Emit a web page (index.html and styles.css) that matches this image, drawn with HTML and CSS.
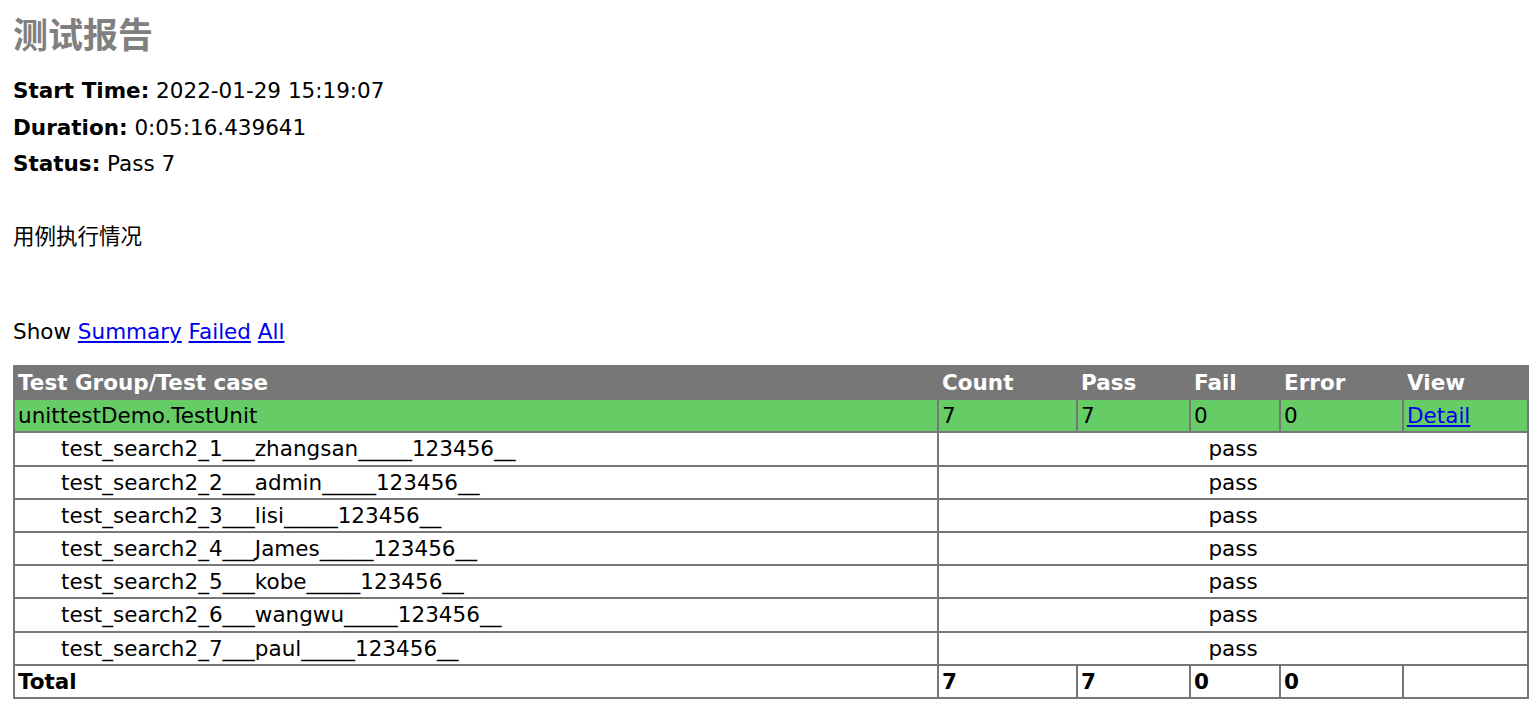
FILE: index.html
```html
<!DOCTYPE html>
<html lang="zh">
<head>
<meta charset="utf-8">
<title>测试报告</title>
<link rel="stylesheet" href="styles.css">
</head>
<body>
<div class="heading">
  <h1 class="title">测试报告</h1>
  <p class="attribute"><strong>Start Time:</strong> 2022-01-29 15:19:07</p>
  <p class="attribute"><strong>Duration:</strong> 0:05:16.439641</p>
  <p class="attribute"><strong>Status:</strong> Pass 7</p>
  <p class="description">用例执行情况</p>
</div>
<p id="show_detail_line">Show <a href="#">Summary</a> <a href="#">Failed</a> <a href="#">All</a></p>
<table id="result_table">
  <colgroup>
    <col class="c-name">
    <col class="c-count">
    <col class="c-pass">
    <col class="c-fail">
    <col class="c-error">
    <col class="c-view">
  </colgroup>
  <tr id="header_row">
    <td>Test Group/Test case</td>
    <td>Count</td>
    <td>Pass</td>
    <td>Fail</td>
    <td>Error</td>
    <td>View</td>
  </tr>
  <tr class="passClass">
    <td>unittestDemo.TestUnit</td>
    <td>7</td>
    <td>7</td>
    <td>0</td>
    <td>0</td>
    <td><a href="#">Detail</a></td>
  </tr>
  <tr><td><div class="testcase">test_search2_1___zhangsan_____123456__</div></td><td colspan="5" class="status">pass</td></tr>
  <tr><td><div class="testcase">test_search2_2___admin_____123456__</div></td><td colspan="5" class="status">pass</td></tr>
  <tr><td><div class="testcase">test_search2_3___lisi_____123456__</div></td><td colspan="5" class="status">pass</td></tr>
  <tr><td><div class="testcase">test_search2_4___James_____123456__</div></td><td colspan="5" class="status">pass</td></tr>
  <tr><td><div class="testcase">test_search2_5___kobe_____123456__</div></td><td colspan="5" class="status">pass</td></tr>
  <tr><td><div class="testcase">test_search2_6___wangwu_____123456__</div></td><td colspan="5" class="status">pass</td></tr>
  <tr><td><div class="testcase">test_search2_7___paul_____123456__</div></td><td colspan="5" class="status">pass</td></tr>
  <tr id="total_row">
    <td>Total</td>
    <td>7</td>
    <td>7</td>
    <td>0</td>
    <td>0</td>
    <td>&nbsp;</td>
  </tr>
</table>
</body>
</html>
```

FILE: styles.css
```css
html, body {
  margin: 0;
  padding: 0;
  background: #fff;
}
body {
  padding: 13px 0 0 13px;
  font-family: "DejaVu Sans", Verdana, "Noto Sans CJK SC", sans-serif;
  font-size: 21.5px;
  color: #000;
}
.title {
  margin: 0;
  font-family: "Noto Sans CJK SC", "DejaVu Sans", sans-serif;
  font-size: 35px;
  line-height: 40px;
  font-weight: bold;
  color: gray;
}
.attribute {
  margin: 25px 0 0;
  line-height: 26px;
}
.attribute + .attribute {
  margin-top: 10.5px;
}
.description {
  margin: 47px 0 0;
  line-height: 26px;
  font-family: "DejaVu Sans", "Noto Sans CJK SC", sans-serif;
}
#show_detail_line {
  margin: 69px 0 0;
  line-height: 26px;
}
a {
  color: #00e;
  text-decoration: underline;
}
#result_table {
  margin-top: 20px;
  width: 1514px;
  table-layout: fixed;
  border-collapse: collapse;
  border: 2px solid #777;
}
.c-name { width: 924px; }
.c-count { width: 139px; }
.c-pass { width: 113px; }
.c-fail { width: 90px; }
.c-error { width: 123px; }
.c-view { width: 125px; }
#result_table td {
  border: 2px solid #777;
  padding: 3px 3px;
  line-height: 25.2px;
  white-space: nowrap;
}
#header_row {
  font-weight: bold;
  color: #fff;
  background-color: #777;
}
.passClass {
  background-color: #6c6;
}
#total_row {
  font-weight: bold;
}
.testcase {
  margin-left: 2em;
}
#result_table td.status {
  text-align: center;
}
```
